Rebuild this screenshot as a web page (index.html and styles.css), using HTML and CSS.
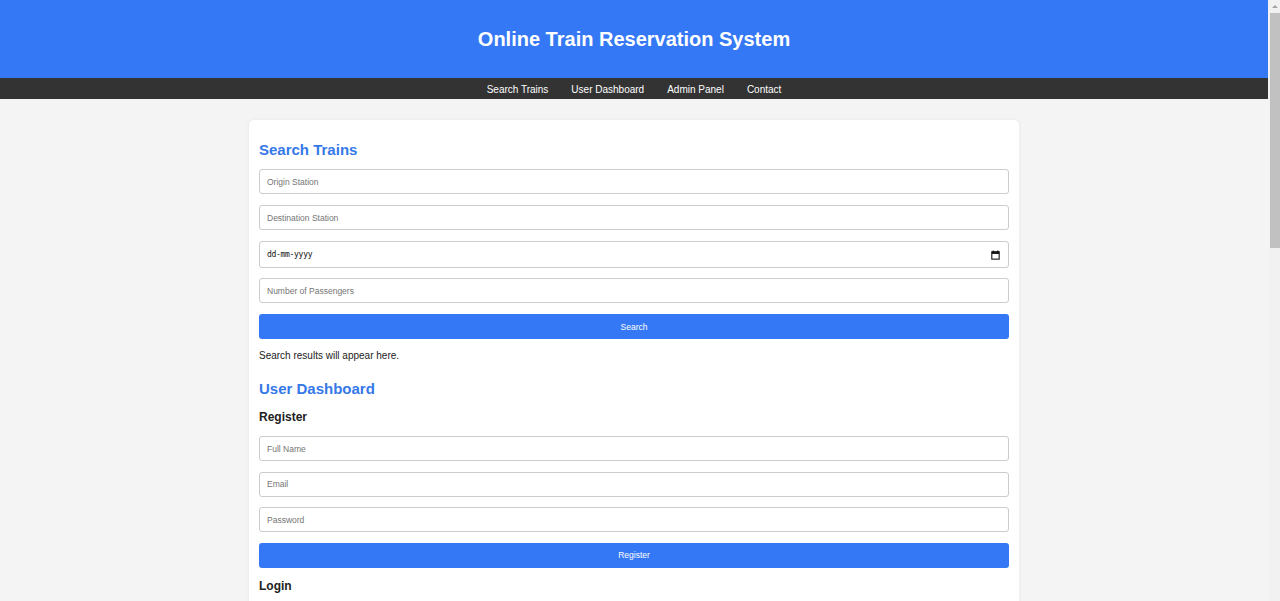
FILE: index.html
```html
<!DOCTYPE html>
<html lang="en">
<head>
<meta charset="utf-8">
<title>Online Train Reservation System</title>
<link rel="stylesheet" href="styles.css">
</head>
<body>
<header class="site-header">
  <h1 class="site-title">Online Train Reservation System</h1>
</header>
<nav class="site-nav">
  <a href="#search">Search Trains</a>
  <a href="#dashboard">User Dashboard</a>
  <a href="#admin">Admin Panel</a>
  <a href="#contact">Contact</a>
</nav>
<main class="container">
  <section id="search">
    <h2 class="section-title first">Search Trains</h2>
    <form class="form">
      <input class="field" type="text" placeholder="Origin Station">
      <input class="field" type="text" placeholder="Destination Station">
      <div class="field date-field">
        <span class="date-text">dd-mm-yyyy</span>
        <svg class="cal-icon" width="9" height="10" viewBox="0 0 10 11"><path d="M2.5 0.5v2M7.5 0.5v2" stroke="#111" stroke-width="1.2" fill="none"/><rect x="0.9" y="1.9" width="8.2" height="8.2" fill="none" stroke="#111" stroke-width="1.2"/><rect x="0.9" y="1.9" width="8.2" height="2.4" fill="#111"/></svg>
      </div>
      <input class="field" type="text" placeholder="Number of Passengers">
      <button class="btn" type="button">Search</button>
    </form>
    <p class="results">Search results will appear here.</p>
  </section>
  <section id="dashboard">
    <h2 class="section-title">User Dashboard</h2>
    <h3 class="sub-title">Register</h3>
    <form class="form form-tight">
      <input class="field" type="text" placeholder="Full Name">
      <input class="field" type="text" placeholder="Email">
      <input class="field" type="password" placeholder="Password">
      <button class="btn" type="button">Register</button>
    </form>
    <h3 class="sub-title">Login</h3>
    <form class="form">
      <input class="field" type="text" placeholder="Email">
      <input class="field" type="password" placeholder="Password">
      <button class="btn" type="button">Login</button>
    </form>
  </section>
  <section id="admin">
    <h2 class="section-title">Admin Panel</h2>
    <p class="results">Manage trains and reservations.</p>
  </section>
  <section id="contact">
    <h2 class="section-title">Contact</h2>
    <p class="results">Email: support@trainreservation.com</p>
  </section>
</main>
<div class="scrollbar" aria-hidden="true">
  <span class="scroll-arrow"></span>
  <span class="scroll-thumb"></span>
</div>
</body>
</html>
```
FILE: styles.css
```css
html, body {
  margin: 0;
  padding: 0;
}
body {
  background: #f4f4f4;
  font-family: "Liberation Sans", Arial, sans-serif;
  color: #222;
  font-size: 10px;
  padding-right: 12px;
}
.site-header {
  background: #3578f5;
  height: 78px;
  display: flex;
  align-items: center;
  justify-content: center;
}
.site-title {
  margin: 0;
  color: #fff;
  font-size: 20px;
  font-weight: bold;
}
.site-nav {
  background: #333;
  box-sizing: border-box;
  height: 21px;
  padding-top: 1px;
  display: flex;
  align-items: center;
  justify-content: center;
  gap: 23px;
}
.site-nav a {
  color: #fff;
  text-decoration: none;
  font-size: 10px;
}
.container {
  width: 750px;
  margin: 21px auto 20px;
  background: #fff;
  padding: 10px;
  border-radius: 5px;
  box-shadow: 0 0 4px rgba(0,0,0,0.06);
}
.section-title {
  color: #3578e8;
  font-size: 15px;
  margin: 12px 0 10px;
  line-height: 17px;
}
.section-title.first {
  margin: 11px 0 11px;
}
.form {
  display: flex;
  flex-direction: column;
  gap: 11px;
}
.form-tight {
  gap: 10.5px;
}
.field {
  box-sizing: border-box;
  width: 100%;
  height: 25px;
  margin: 0;
  padding: 0 7px;
  border: 1px solid #ccc;
  border-radius: 3px;
  font-family: "Liberation Sans", Arial, sans-serif;
  font-size: 8.5px;
  color: #222;
  background: #fff;
}
.field::placeholder {
  color: #757575;
}
.date-field {
  height: 27px;
  margin-bottom: -1px;
  display: flex;
  align-items: center;
  justify-content: space-between;
  padding: 0 8px 0 7px;
}
.date-text {
  font-family: "DejaVu Sans Mono", monospace;
  font-size: 8px;
  color: #111;
  letter-spacing: -0.3px;
}
.cal-icon {
  display: block;
}
.btn {
  box-sizing: border-box;
  width: 100%;
  height: 25px;
  border: none;
  border-radius: 3px;
  background: #3578f5;
  color: #fff;
  font-family: "Liberation Sans", Arial, sans-serif;
  font-size: 8.5px;
  cursor: pointer;
}
.results {
  margin: 10px 0 18px;
  font-size: 10px;
  line-height: 13px;
  color: #222;
}
.sub-title {
  font-size: 12px;
  line-height: 16px;
  margin: 12px 0 11px;
  color: #222;
}
.form + .sub-title {
  margin-top: 10px;
}
.scrollbar {
  position: fixed;
  top: 0;
  right: 0;
  width: 11px;
  height: 100%;
  background: #f1f1f1;
}
.scroll-arrow {
  position: absolute;
  top: 5px;
  left: 3px;
  width: 0;
  height: 0;
  border-left: 3px solid transparent;
  border-right: 3px solid transparent;
  border-bottom: 3px solid #a3a3a3;
}
.scroll-thumb {
  position: absolute;
  top: 13px;
  left: 1px;
  right: 0;
  height: 235px;
  background: #c1c1c1;
}
```
